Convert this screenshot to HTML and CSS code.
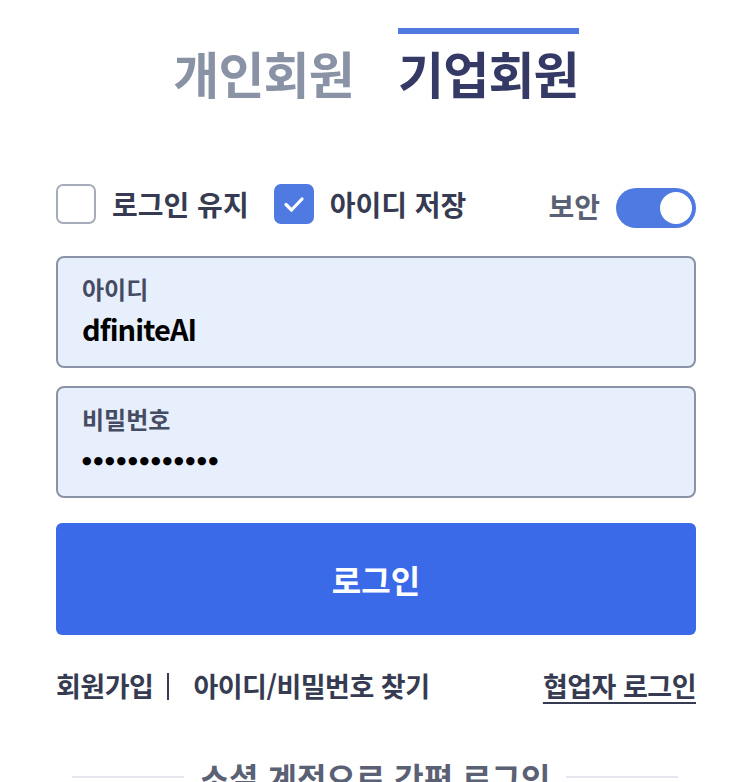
FILE: index.html
```html
<!DOCTYPE html>
<html lang="ko">
  <head>
    <meta charset="utf-8">
    <link rel="stylesheet" href="styles.css">
  </head>
  <body>
    <div class="login">
      <div class="tabs">
        <div class="tab">개인회원</div>
        <div class="tab active">기업회원</div>
      </div>

      <div class="options">
        <label class="check">
          <span class="box"></span>
          로그인 유지
        </label>
        <label class="check">
          <span class="box checked">
            <svg viewBox="0 0 40 40" width="40" height="40">
              <path d="M12 20.5 L17.5 26 L28 15" fill="none" stroke="#fff" stroke-width="3.2" stroke-linecap="round" stroke-linejoin="round"/>
            </svg>
          </span>
          아이디 저장
        </label>
        <div class="secure">
          보안
          <span class="toggle"><span class="knob"></span></span>
        </div>
      </div>

      <div class="field">
        <div class="field-label">아이디</div>
        <div class="field-value">dfiniteAI</div>
      </div>
      <div class="field">
        <div class="field-label">비밀번호</div>
        <div class="field-value dots">●●●●●●●●●●●●</div>
      </div>

      <button class="submit">로그인</button>

      <div class="links">
        <a class="link">회원가입</a>
        <span class="sep"></span>
        <a class="link">아이디/비밀번호 찾기</a>
        <a class="link partner">협업자 로그인</a>
      </div>

      <div class="social">
        <span class="line"></span>
        <span class="social-title">소셜 계정으로 간편 로그인</span>
        <span class="line"></span>
      </div>
    </div>
  </body>
</html>
```

FILE: styles.css
```css
body {
  margin: 0;
  background: #fff;
  font-family: "Noto Sans CJK KR", "Noto Sans", sans-serif;
  color: #363b52;
}
.login {
  padding: 28px 38px 0 56px;
  overflow: hidden;
  height: 754px;
}

/* tabs */
.tabs {
  display: flex;
  justify-content: center;
  gap: 44px;
}
.tab {
  border-top: 6px solid transparent;
  font-size: 50px;
  font-weight: 700;
  line-height: 76px;
  padding-bottom: 4px;
  letter-spacing: -0.8px;
  color: #8a93a6;
}
.tab.active {
  border-top-color: #5079e1;
  color: #343a65;
}

/* options row */
.options {
  display: flex;
  align-items: flex-start;
  margin-top: 70px;
  height: 44px;
}
.check {
  display: flex;
  align-items: center;
  gap: 16px;
  font-size: 28px;
  font-weight: 700;
  height: 40px;
  margin-right: 25px;
}
.box {
  width: 40px;
  height: 40px;
  box-sizing: border-box;
  border: 2px solid #a6acb9;
  border-radius: 7px;
  background: #fff;
}
.box.checked {
  border: 0;
  background: #4f7ae2;
}
.box svg {
  display: block;
}
.secure {
  margin-left: auto;
  display: flex;
  align-items: center;
  gap: 16px;
  font-size: 28px;
  font-weight: 700;
  color: #5b6174;
  height: 40px;
  margin-top: 2px;
}
.toggle {
  width: 80px;
  height: 40px;
  border-radius: 20px;
  background: #4f7ae2;
  display: flex;
  align-items: center;
  justify-content: flex-end;
  padding: 0 4px;
  box-sizing: border-box;
  margin-top: 4px;
}
.knob {
  width: 32px;
  height: 32px;
  border-radius: 50%;
  background: #fff;
}

/* fields */
.field {
  height: 112px;
  box-sizing: border-box;
  border: 2px solid #8a92a6;
  border-radius: 8px;
  background: #e8effc;
  padding: 14px 24px 0;
}
.field + .field {
  margin-top: 18px;
}
.options + .field {
  margin-top: 28px;
}
.field-label {
  font-size: 24px;
  font-weight: 700;
  line-height: 34px;
  color: #454b63;
}
.field-value {
  font-size: 29px;
  font-weight: 700;
  line-height: 44px;
  letter-spacing: -0.9px;
  color: #000;
}
.field-value.dots {
  font-family: "DejaVu Sans", sans-serif;
  font-size: 11px;
  letter-spacing: 1.9px;
  line-height: 50px;
}

/* submit */
.submit {
  display: block;
  width: 100%;
  height: 112px;
  margin-top: 25px;
  border: 0;
  border-radius: 6px;
  background: #3b6ae8;
  color: #fff;
  font-family: inherit;
  font-size: 32px;
  font-weight: 700;
}

/* links */
.links {
  display: flex;
  align-items: center;
  margin-top: 34px;
  font-size: 27px;
  font-weight: 700;
  line-height: 34px;
}
.link {
  color: #363b52;
  letter-spacing: -0.5px;
}
.sep {
  width: 2px;
  height: 27px;
  background: #363b52;
  margin: 0 24px 0 14px;
}
.partner {
  margin-left: auto;
  text-decoration: underline;
  text-underline-offset: 5px;
  text-decoration-thickness: 2px;
}

/* social */
.social {
  display: flex;
  align-items: center;
  gap: 16px;
  margin: 54px 18px 0 16px;
}
.line {
  flex: 1;
  height: 2px;
  background: #e4e7ee;
}
.social-title {
  font-size: 32px;
  font-weight: 700;
  color: #5b6174;
  line-height: 40px;
}
```
